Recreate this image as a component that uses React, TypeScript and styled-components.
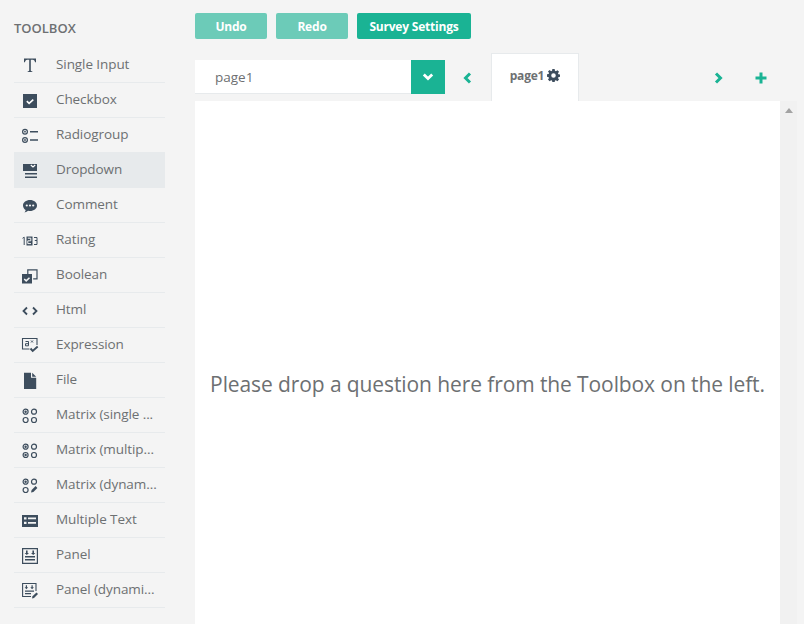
import React from "react";
import styled, { createGlobalStyle } from "styled-components";

const GlobalStyle = createGlobalStyle`
  html, body {
    margin: 0;
    height: 100%;
    overflow: hidden;
    background: #f4f4f4;
    font-family: "Open Sans", "Noto Sans", sans-serif;
  }
`;

const Root = styled.div`
  display: flex;
  width: 804px;
  height: 624px;
  overflow: hidden;
`;

const Sidebar = styled.aside`
  width: 151px;
  margin-left: 14px;
  flex: none;
`;

const SidebarTitle = styled.h3`
  margin: 0;
  height: 48px;
  padding-top: 20px;
  box-sizing: border-box;
  font-size: 13px;
  line-height: 17px;
  font-weight: 600;
  color: #6d7072;
`;

const ToolItem = styled.div<{ $active?: boolean }>`
  display: flex;
  align-items: center;
  height: 35px;
  box-sizing: border-box;
  border-bottom: 1px solid #e7eaec;
  background: ${(p) => (p.$active ? "#e7eaec" : "transparent")};
`;

const ToolIcon = styled.span`
  width: 32px;
  height: 16px;
  flex: none;
  display: flex;
  justify-content: center;
  align-items: center;
`;

const ToolLabel = styled.span`
  margin-left: 10px;
  margin-top: -2px;
  font-size: 13.5px;
  letter-spacing: -0.08px;
  color: #6d7072;
  white-space: nowrap;
`;

const Main = styled.main`
  margin-left: 30px;
  width: 602px;
  flex: none;
`;

const Toolbar = styled.div`
  display: flex;
  gap: 9px;
  height: 53px;
  padding-top: 13px;
  box-sizing: border-box;
`;

const ToolButton = styled.button<{ $dim?: boolean; $width: number }>`
  width: ${(p) => p.$width}px;
  height: 26px;
  padding: 0;
  border: none;
  border-radius: 2px;
  background: ${(p) => (p.$dim ? "#6ccbb8" : "#1ab394")};
  color: #fff;
  font-family: inherit;
  font-size: 12px;
  font-weight: 700;
  letter-spacing: -0.2px;
`;

const TabRow = styled.div`
  display: flex;
  height: 48px;
`;

const PagePicker = styled.div`
  display: flex;
  width: 250px;
  height: 34px;
  margin-top: 7px;
  flex: none;
`;

const PageName = styled.div`
  width: 216px;
  height: 34px;
  box-sizing: border-box;
  padding-left: 20px;
  background: #fff;
  border-bottom: 1px solid #e7eaec;
  font-size: 13.5px;
  line-height: 34px;
  color: #6d7072;
`;

const PageToggle = styled.div`
  width: 34px;
  height: 34px;
  background: #1ab394;
  display: flex;
  align-items: center;
  justify-content: center;
`;

const NavButton = styled.div<{ $width: number }>`
  width: ${(p) => p.$width}px;
  height: 34px;
  margin-top: 8px;
  flex: none;
  display: flex;
  align-items: center;
  justify-content: center;
`;

const Tab = styled.div`
  width: 88px;
  height: 48px;
  flex: none;
  box-sizing: border-box;
  border: 1px solid #e7eaec;
  border-bottom: none;
  background: #fff;
  display: flex;
  align-items: center;
  justify-content: center;
  gap: 3px;
  padding-bottom: 4px;
  font-size: 12px;
  font-weight: 700;
  letter-spacing: -0.2px;
  color: #6d7072;
`;

const Spacer = styled.div`
  width: 122px;
  flex: none;
`;

const CanvasRow = styled.div`
  display: flex;
`;

const Canvas = styled.div`
  width: 585px;
  height: 566px;
  flex: none;
  background: #fff;
  display: flex;
  align-items: center;
  justify-content: center;
`;

const Hint = styled.div`
  font-size: 21px;
  letter-spacing: -0.1px;
  color: #6d7072;
  white-space: nowrap;
`;

const Scrollbar = styled.div`
  width: 17px;
  height: 566px;
  background: #f1f1f1;
  display: flex;
  justify-content: center;
  align-items: flex-start;
  padding-top: 7px;
  box-sizing: border-box;
`;

const dark = "#3d4d5d";
const green = "#1ab394";
const paper = "#f4f4f4";

const Svg = ({ children }: { children: React.ReactNode }) => (
  <svg width={16} height={16} viewBox="0 0 16 16" fill={dark} overflow="visible">
    {children}
  </svg>
);

const line = { fill: "none", stroke: dark };

const MatrixCells = ({ dots, pen }: { dots: number[]; pen?: boolean }) => {
  const cells = [
    [3.6, 4.7],
    [12, 4.7],
    [3.6, 13],
    [12, 13],
  ];
  return (
    <Svg>
      {cells.map(([cx, cy], i) =>
        pen && i === 3 ? (
          <path key={i} d="M9 15.5l.6-2.4 4-4 1.8 1.8-4 4z" />
        ) : (
          <g key={i}>
            <circle cx={cx} cy={cy} r={2.5} {...line} strokeWidth={1.2} />
            {dots.includes(i) && <circle cx={cx} cy={cy} r={1.2} />}
          </g>
        )
      )}
    </Svg>
  );
};

const icons: Record<string, React.ReactNode> = {
  text: (
    <Svg>
      <path d="M2 1.500h12v3.700h-1c-.2-1.600-.8-2.500-2.300-2.500H8.800v10.800c0 .5.400.7 1.500.7v.8H5.700v-.8c1.100 0 1.500-.2 1.500-.7V2.700H5.300C3.800 2.700 3.200 3.600 3 5.200H2z" />
    </Svg>
  ),
  checkbox: (
    <Svg>
      <path d="M1 2h14v14H1z" />
      <path d="M4.800 9.200l2.300 2.200 4.200-3.800" {...line} stroke="#fff" strokeWidth={1.6} />
    </Svg>
  ),
  radio: (
    <Svg>
      <circle cx={3} cy={4.7} r={2.4} {...line} strokeWidth={1.2} />
      <circle cx={3} cy={4.7} r={0.9} />
      <circle cx={3} cy={13} r={2.4} {...line} strokeWidth={1.2} />
      <circle cx={3} cy={13} r={0.9} />
      <path d="M8 3.900h8v1.600H8zM8 12.200h8v1.600H8z" />
    </Svg>
  ),
  dropdown: (
    <Svg>
      <path d="M1 2h14v7H1z" />
      <path d="M8.800 3l2.200 2 2.200-2" {...line} stroke="#fff" strokeWidth={1.2} />
      <path d="M3 11h12v1.600H3zM3 14.400h12V16H3z" />
    </Svg>
  ),
  comment: (
    <Svg>
      <g transform="translate(0 1.5)">
        <path d="M8 1.500c3.900 0 7 2.400 7 5.500s-3.100 5.500-7 5.500c-.7 0-1.300-.1-1.900-.2-.9.9-2.100 1.500-3.600 1.700.7-.7 1.100-1.500 1.200-2.500C2 10.500 1 8.900 1 7c0-3.100 3.100-5.500 7-5.500z" />
        <circle cx={4.8} cy={7} r={1.1} fill={paper} />
        <circle cx={8} cy={7} r={1.1} fill={paper} />
        <circle cx={11.2} cy={7} r={1.1} fill={paper} />
      </g>
    </Svg>
  ),
  rating: (
    <Svg>
      <path d="M.5 6.300l1.700-1.100V13" {...line} strokeWidth={1} />
      <path d="M4.500 4.500h6V13.500h-6z" />
      <path d="M5.800 6.200h3v2.600h-3v2.800h3.200" {...line} stroke={paper} strokeWidth={1} />
      <path d="M12 5.500h3v3h-2.200M15 8.500v4h-3" {...line} strokeWidth={1} />
    </Svg>
  ),
  boolean: (
    <Svg>
      <path d="M5.800 7V2.900H15v9h-3.800" {...line} strokeWidth={1.2} />
      <path d="M0 7h10v9.500H0z" />
      <path d="M2.200 12l2 1.900 3.300-3.200" {...line} stroke={paper} strokeWidth={1.5} />
    </Svg>
  ),
  html: (
    <Svg>
      <path d="M5 5.500L1.500 9 5 12.500M11 5.500L14.500 9 11 12.500" {...line} strokeWidth={1.8} />
    </Svg>
  ),
  expression: (
    <Svg>
      <path d="M7.500 12H.5V1.500H15V8" {...line} strokeWidth={1.1} />
      <path d="M3.500 4.500h3v4.300h-3V6.700h3" {...line} strokeWidth={1} />
      <path d="M9 3.500l2 2M11 3.500l-2 2" {...line} strokeWidth={0.9} />
      <path d="M8.500 11.500l2.200 2.400 5-4.400" {...line} strokeWidth={1.9} />
    </Svg>
  ),
  file: (
    <Svg>
      <path d="M2 .7h7v5h5.200V17H2z" />
      <path d="M10.200.7l4 4h-4z" />
    </Svg>
  ),
  matrixSingle: <MatrixCells dots={[0]} />,
  matrixMulti: <MatrixCells dots={[0, 2]} />,
  matrixDynamic: <MatrixCells dots={[0]} pen />,
  multipleText: (
    <Svg>
      <path
        fillRule="evenodd"
        d="M0 3h16v12H0zM2 5.200v2.300h2.500V5.200zM6 5.500v1.700h8V5.500zM2 9.800v2.300h2.500V9.800zM6 10.100v1.700h8v-1.700z"
      />
    </Svg>
  ),
  panel: (
    <Svg>
      <path d="M.6 1.600h14.800v14.800H.6z" {...line} strokeWidth={1.2} />
      <path d="M3 9h10v1.500H3zM3 12h10v1.500H3zM4 3.500h1.600V6H7L4.800 8 2.600 6H4zM10.400 3.500H12V6h1.400l-2.200 2L9 6h1.400z" />
    </Svg>
  ),
  panelDynamic: (
    <Svg>
      <path d="M9 14.500H.6V1.500h13.400V9" {...line} strokeWidth={1.1} />
      <path d="M3 8.500h9v1.200H3zM3 11h6v1.200H3zM3.800 3.300H5v2h1.200L4.400 7.300 2.600 5.300h1.200zM9.500 3.300h1.200v2h1.200l-1.800 2-1.800-2h1.200z" />
      <path d="M10 16.500l.5-2.200 4-3.800 1.500 1.500-4 3.900z" />
    </Svg>
  ),
};

const tools = [
  { label: "Single Input", icon: "text" },
  { label: "Checkbox", icon: "checkbox" },
  { label: "Radiogroup", icon: "radio" },
  { label: "Dropdown", icon: "dropdown", active: true },
  { label: "Comment", icon: "comment" },
  { label: "Rating", icon: "rating" },
  { label: "Boolean", icon: "boolean" },
  { label: "Html", icon: "html" },
  { label: "Expression", icon: "expression" },
  { label: "File", icon: "file" },
  { label: "Matrix (single ...", icon: "matrixSingle" },
  { label: "Matrix (multip...", icon: "matrixMulti" },
  { label: "Matrix (dynam...", icon: "matrixDynamic" },
  { label: "Multiple Text", icon: "multipleText" },
  { label: "Panel", icon: "panel" },
  { label: "Panel (dynami...", icon: "panelDynamic" },
];

const Glyph = ({ d, color = green, weight = 3 }: { d: string; color?: string; weight?: number }) => (
  <svg width={12} height={12} viewBox="0 0 12 12" fill="none" stroke={color} strokeWidth={weight}>
    <path d={d} />
  </svg>
);

const App = () => (
  <Root>
    <GlobalStyle />
    <Sidebar>
      <SidebarTitle>TOOLBOX</SidebarTitle>
      {tools.map((tool) => (
        <ToolItem key={tool.label} $active={tool.active}>
          <ToolIcon>{icons[tool.icon]}</ToolIcon>
          <ToolLabel>{tool.label}</ToolLabel>
        </ToolItem>
      ))}
    </Sidebar>
    <Main>
      <Toolbar>
        <ToolButton $dim $width={72}>Undo</ToolButton>
        <ToolButton $dim $width={72}>Redo</ToolButton>
        <ToolButton $width={114}>Survey Settings</ToolButton>
      </Toolbar>
      <TabRow>
        <PagePicker>
          <PageName>page1</PageName>
          <PageToggle>
            <Glyph d="M1.800 3.500L6 7.500l4.200-4" color="#fff" weight={2.8} />
          </PageToggle>
        </PagePicker>
        <NavButton $width={46}>
          <Glyph d="M8 1.500L3.500 6 8 10.500" />
        </NavButton>
        <Tab>
          page1
          <svg width={13} height={13} viewBox="0 0 16 16" fill={dark}>
            <path
              fillRule="evenodd"
              d="M6.600 0h2.800l.4 2.200 1.200.5 1.800-1.300 2 2-1.300 1.800.5 1.200 2 .4v2.800l-2 .4-.5 1.200 1.300 1.800-2 2-1.800-1.300-1.200.5-.4 2.200H6.600l-.4-2.200-1.200-.5-1.800 1.300-2-2 1.300-1.800-.5-1.200-2-.4V6.600l2-.4.5-1.200-1.300-1.800 2-2L5 2.700l1.200-.5zM8 5.200a2.800 2.800 0 1 0 0 5.600 2.800 2.800 0 0 0 0-5.600z"
            />
          </svg>
        </Tab>
        <Spacer />
        <NavButton $width={34}>
          <Glyph d="M4 1.500L8.500 6 4 10.500" />
        </NavButton>
        <NavButton $width={51}>
          <Glyph d="M6 .5v11M.5 6h11" />
        </NavButton>
      </TabRow>
      <CanvasRow>
        <Canvas>
          <Hint>Please drop a question here from the Toolbox on the left.</Hint>
        </Canvas>
        <Scrollbar>
          <svg width={8} height={5} viewBox="0 0 8 5" fill="#a3a3a3">
            <path d="M4 0l4 5H0z" />
          </svg>
        </Scrollbar>
      </CanvasRow>
    </Main>
  </Root>
);

export default App;
